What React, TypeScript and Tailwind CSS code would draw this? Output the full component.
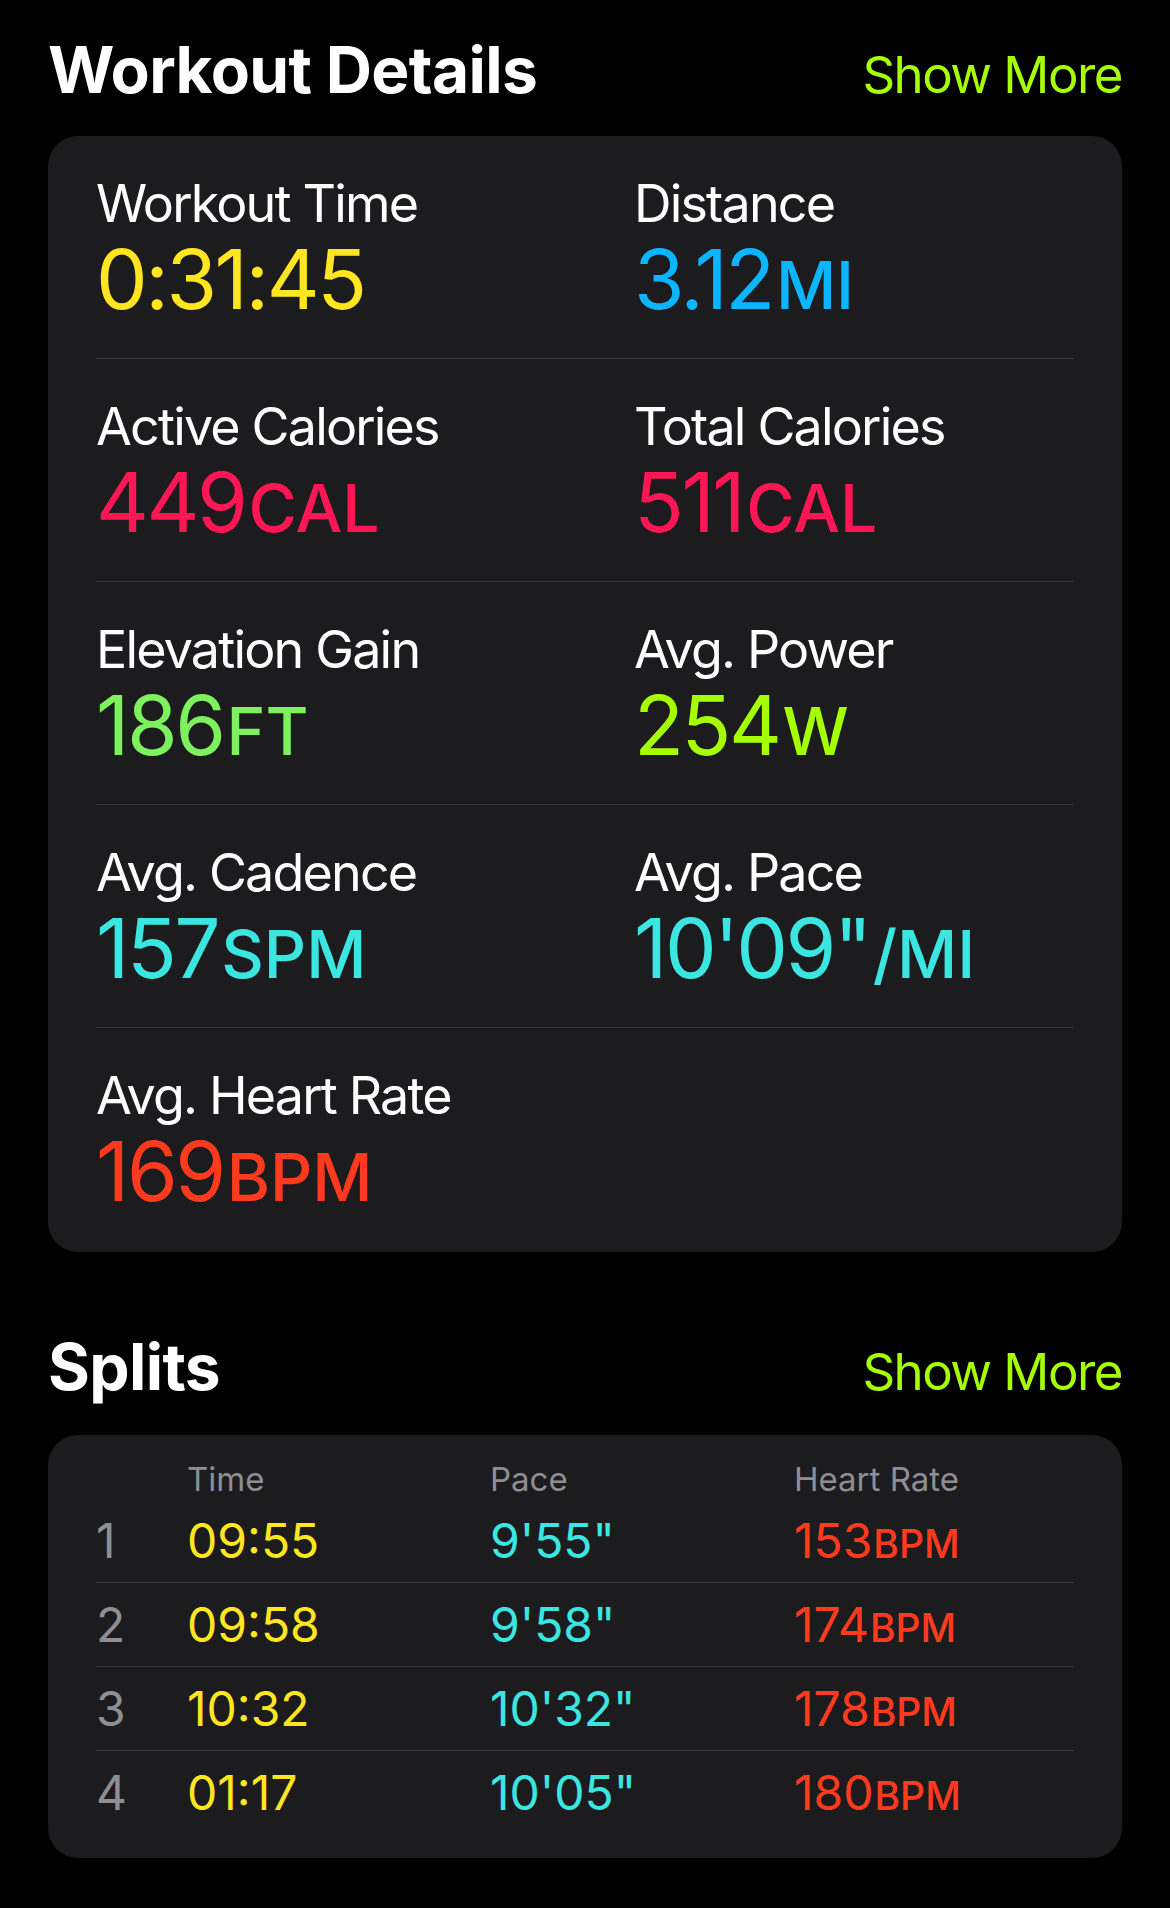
import type { ReactNode } from 'react'

const FONT = "font-['Inter','Noto_Sans',sans-serif]"

interface Metric {
  label: string
  value: string
  unit: string
  color: string
}

const METRICS: Metric[][] = [
  [
    { label: 'Workout Time', value: '0:31:45', unit: '', color: 'text-[#ffe620]' },
    { label: 'Distance', value: '3.12', unit: 'MI', color: 'text-[#0cb5ff]' },
  ],
  [
    { label: 'Active Calories', value: '449', unit: 'CAL', color: 'text-[#ff1654]' },
    { label: 'Total Calories', value: '511', unit: 'CAL', color: 'text-[#ff1654]' },
  ],
  [
    { label: 'Elevation Gain', value: '186', unit: 'FT', color: 'text-[#7ef25e]' },
    { label: 'Avg. Power', value: '254', unit: 'W', color: 'text-[#a6ff00]' },
  ],
  [
    { label: 'Avg. Cadence', value: '157', unit: 'SPM', color: 'text-[#3ce6e0]' },
    { label: 'Avg. Pace', value: `10'09"`, unit: '/MI', color: 'text-[#3ce6e0]' },
  ],
  [{ label: 'Avg. Heart Rate', value: '169', unit: 'BPM', color: 'text-[#ff3a1f]' }],
]

const SPLITS = [
  { n: '1', time: '09:55', pace: `9'55"`, hr: '153' },
  { n: '2', time: '09:58', pace: `9'58"`, hr: '174' },
  { n: '3', time: '10:32', pace: `10'32"`, hr: '178' },
  { n: '4', time: '01:17', pace: `10'05"`, hr: '180' },
]

function SectionHeader({ title, className }: { title: string; className?: string }) {
  return (
    <div className={`flex items-baseline justify-between ${className ?? ''}`}>
      <h2 className="text-[64px] font-bold leading-[64px] tracking-[-0.01em] text-white">{title}</h2>
      <button className="text-[51px] leading-none tracking-[-0.03em] text-[#a6ff00]">Show More</button>
    </div>
  )
}

function MetricCell({ m }: { m: Metric }) {
  return (
    <div>
      <div className="text-[52px] leading-[52px] tracking-[-0.035em] text-white">{m.label}</div>
      <div className={`mt-[8px] h-[84px] text-[82px] leading-[84px] ${m.color}`}>
        <span className="tracking-[-0.03em]">{m.value}</span>
        {m.unit && <span className="ml-[3px] text-[66px] font-medium leading-none">{m.unit}</span>}
      </div>
    </div>
  )
}

function Card({ children, className }: { children: ReactNode; className?: string }) {
  return <div className={`rounded-[30px] bg-[#1c1c1e] px-[48px] ${className ?? ''}`}>{children}</div>
}

export default function App() {
  return (
    <div className={`min-h-[1908px] bg-black px-[48px] pt-[38px] ${FONT}`}>
      <SectionHeader title="Workout Details" />

      <Card className="mt-[34px]">
        {METRICS.map((row, i) => (
          <div
            key={i}
            className={`grid grid-cols-[538px_1fr] pt-[42px] ${
              i < METRICS.length - 1 ? 'border-b border-[#38383a] pb-[36px]' : 'pb-[38px]'
            }`}
          >
            {row.map((m) => (
              <MetricCell key={m.label} m={m} />
            ))}
          </div>
        ))}
      </Card>

      <SectionHeader title="Splits" className="mt-[83px]" />

      <Card className="mt-[36px] pb-[23px]">
        <div className="grid h-[64px] grid-cols-[91px_303px_304px_1fr] pt-[28px] text-[33px] leading-[32px] text-[#8e8e93]">
          <span />
          <span>Time</span>
          <span>Pace</span>
          <span>Heart Rate</span>
        </div>
        {SPLITS.map((s, i) => (
          <div
            key={s.n}
            className={`grid h-[84px] grid-cols-[91px_303px_304px_1fr] pt-[18px] text-[48px] leading-[48px] ${
              i < SPLITS.length - 1 ? 'border-b border-[#38383a]' : ''
            }`}
          >
            <span className="text-[#8e8e93]">{s.n}</span>
            <span className="text-[#ffe620]">{s.time}</span>
            <span className="text-[#3ce6e0]">{s.pace}</span>
            <span className="text-[#ff3a1f]">
              {s.hr}
              <span className="ml-[1px] text-[39px] font-medium leading-none">BPM</span>
            </span>
          </div>
        ))}
      </Card>
    </div>
  )
}
